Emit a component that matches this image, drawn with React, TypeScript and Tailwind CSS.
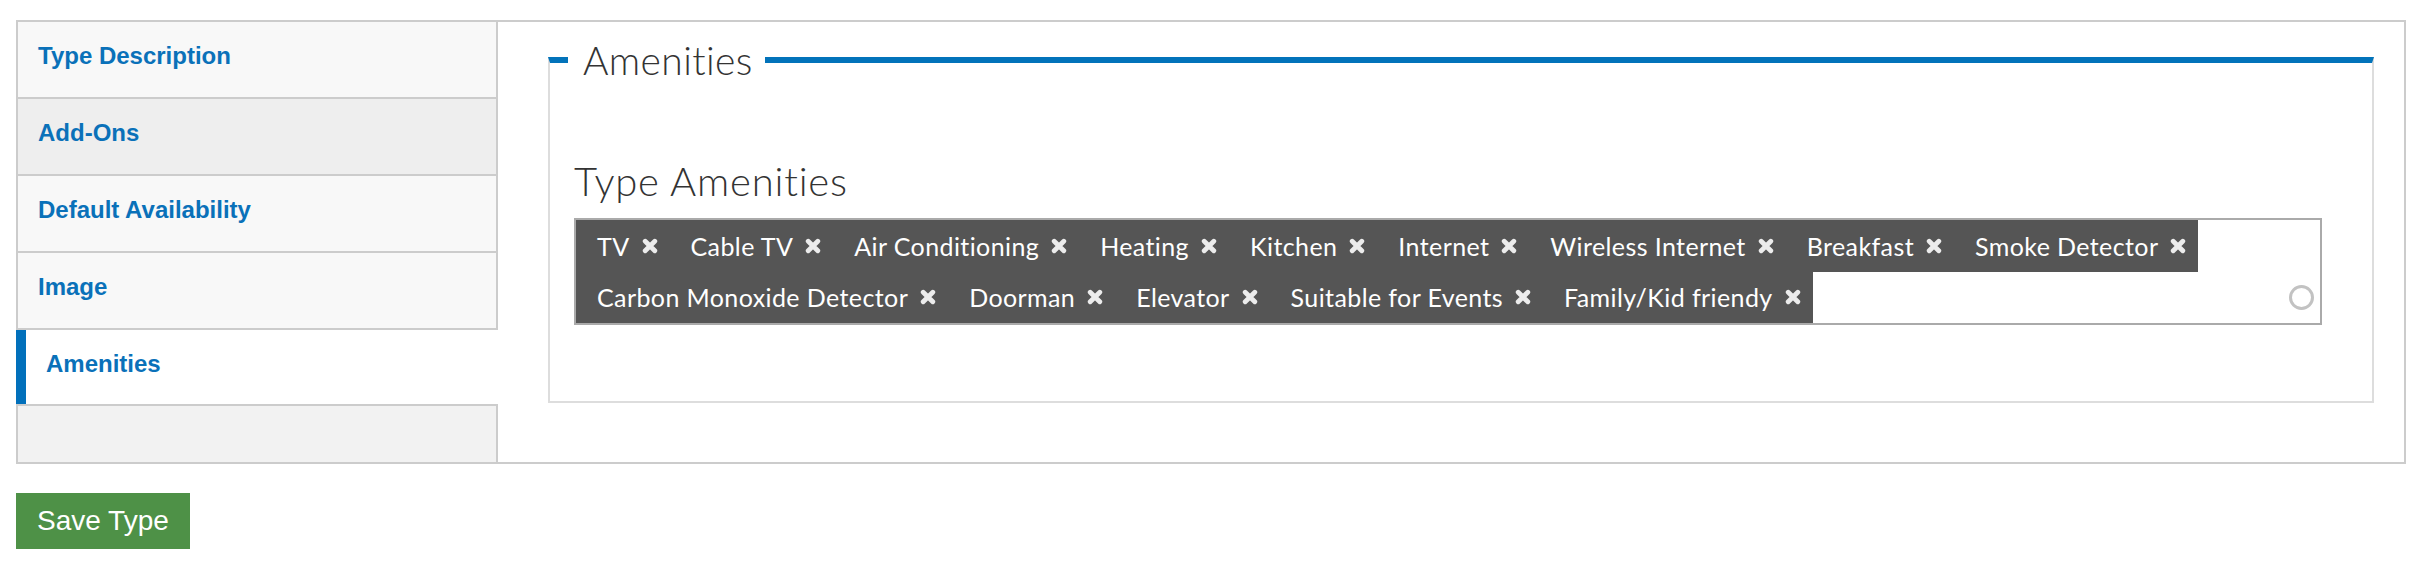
import React from 'react';

const navItems = [
  { label: 'Type Description', bg: 'bg-[#f8f8f8]' },
  { label: 'Add-Ons', bg: 'bg-[#eeeeee]' },
  { label: 'Default Availability', bg: 'bg-[#f8f8f8]' },
  { label: 'Image', bg: 'bg-[#f8f8f8]' },
];

const amenities = [
  'TV', 'Cable TV', 'Air Conditioning', 'Heating', 'Kitchen', 'Internet',
  'Wireless Internet', 'Breakfast', 'Smoke Detector', 'Carbon Monoxide Detector',
  'Doorman', 'Elevator', 'Suitable for Events', 'Family/Kid friendy',
];

function RemoveIcon() {
  return (
    <svg className="ml-[12px] shrink-0" width="16" height="16" viewBox="0 0 16 16">
      <path d="M3.2 3.2l9.6 9.6M12.8 3.2l-9.6 9.6" stroke="#ececec" strokeWidth="4.8" strokeLinecap="round" />
    </svg>
  );
}

function Tag({ label }: { label: string }) {
  return (
    <li className="h-[51.5px] flex items-center bg-[#555555] pl-[21px] pr-[12px] text-white text-[25px] leading-[30px] tracking-[0.4px]">
      <span>{label}</span>
      <RemoveIcon />
    </li>
  );
}

export default function App() {
  return (
    <div className="min-h-screen bg-white px-[16px] pt-[20px] font-['Liberation_Sans',Arial,sans-serif]">
      <div className="flex border-2 border-[#cccccc]">
        {/* Side tabs */}
        <nav className="w-[480px] shrink-0 flex flex-col">
          {navItems.map(item => (
            <div
              key={item.label}
              className={`h-[77px] border-b-2 border-r-2 border-[#cccccc] ${item.bg} pl-[20px] pt-[20px] text-[24px] leading-[28px] font-bold text-[#0a71b9]`}
            >
              {item.label}
            </div>
          ))}
          <div className="h-[74px] -ml-[2px] border-l-[10px] border-[#0270bb] bg-white pl-[20px] pt-[20px] text-[24px] leading-[28px] font-bold text-[#0a71b9]">
            Amenities
          </div>
          <div className="flex-1 border-t-2 border-r-2 border-[#cccccc] bg-[#f2f2f2]" />
        </nav>

        {/* Panel */}
        <div className="flex-1 pl-[50px] pr-[30px] pt-[16px] pb-[59px] font-['Lato',sans-serif]">
          <fieldset className="m-0 border-2 border-[#dddddd] border-t-[6px] border-t-[#0273ba] pl-[24px] pr-[50px] pb-[76px]">
            <legend className="-ml-[6px] pl-[15px] pr-[12px] text-[39px] leading-[44px] tracking-[0.4px] font-light text-[#333333]">
              Amenities
            </legend>
            <div className="pt-[77px]">
              <label className="block text-[40px] leading-[44px] tracking-[0.8px] font-light text-[#333333] mb-[15px]">
                Type Amenities
              </label>
              <ul className="flex flex-wrap border-2 border-[#aaaaaa] bg-white">
                {amenities.map(a => <Tag key={a} label={a} />)}
                <li className="grow basis-[200px] h-[51.5px] flex items-center justify-end pr-[6px]">
                  <div className="w-[25px] h-[25px] rounded-full border-[3px] border-[#c2c2c2]" />
                </li>
              </ul>
            </div>
          </fieldset>
        </div>
      </div>

      <button className="mt-[29px] h-[56px] px-[21px] bg-[#4e9147] text-white text-[28px]">
        Save Type
      </button>
    </div>
  );
}
